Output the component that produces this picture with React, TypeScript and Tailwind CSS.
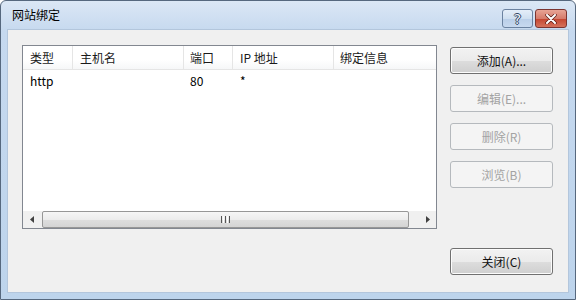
import React from "react";

const font = { fontFamily: '"Noto Sans CJK SC", "Noto Sans", sans-serif' };

function Btn({ label, disabled }: { label: string; disabled?: boolean }) {
  if (disabled) {
    return (
      <div className="h-[27px] w-[103px] rounded-[3px] border border-[#b5b9bd] bg-[#f4f4f4] flex items-center justify-center text-[12px] text-[#a3a3a3]">
        {label}
      </div>
    );
  }
  return (
    <div className="h-[27px] w-[103px] rounded-[3px] border border-[#707070] bg-[linear-gradient(#f2f2f2_0%,#ebebeb_50%,#dddddd_51%,#cfcfcf_100%)] shadow-[inset_0_0_0_1px_#fcfcfc] flex items-center justify-center text-[12px] text-[#111]">
      {label}
    </div>
  );
}

export default function App() {
  return (
    <div className="w-[576px] h-[300px] bg-white" style={font}>
      <div className="w-[576px] h-[300px] flex flex-col rounded-t-[6px] border border-[#56687e] bg-[linear-gradient(#dbe7f5_0px,#c6d9ef_30px,#bdd4ec_100%)]">
        <div className="h-[28px] flex items-start shrink-0">
          <div className="pl-[11px] pt-[5px] text-[12px] text-black leading-[18px]">网站绑定</div>
          <div className="ml-auto flex pt-[8px] pr-[8px] gap-[2px]">
            <div className="w-[31px] h-[19px] rounded-[3px] border border-[#6b82a0] bg-[linear-gradient(#e5eef9_0%,#cfdff0_50%,#b9cee8_51%,#c7d9ef_100%)] flex items-center justify-center">
              <span
                className="text-[14px] text-[#eef4fb] leading-none"
                style={{
                  fontFamily: '"DejaVu Sans", sans-serif',
                  textShadow: "1px 0 0 #2f4461, -1px 0 0 #2f4461, 0 1px 0 #2f4461, 0 -1px 0 #2f4461",
                }}
              >
                ?
              </span>
            </div>
            <div className="w-[32px] h-[19px] rounded-[3px] border border-[#7b3430] bg-[linear-gradient(#e8a495_0%,#d67b6b_50%,#c4442f_51%,#d5725c_100%)] flex items-center justify-center">
              <svg width="12" height="10" viewBox="0 0 12 10">
                <path d="M2 1 L10 9 M10 1 L2 9" stroke="#5a1a14" strokeWidth="3.4" strokeLinecap="round" />
                <path d="M2 1 L10 9 M10 1 L2 9" stroke="#ffffff" strokeWidth="2" strokeLinecap="round" />
              </svg>
            </div>
          </div>
        </div>
        <div className="flex-1 mx-[6px] mb-[6px] border border-[#b3c6dc] bg-[#f0f0f0] flex pt-[15px] pl-[14px] pr-[14px] pb-[17px]">
          <div className="w-[415px] h-[184px] border border-[#828790] bg-white flex flex-col">
            <div className="h-[24px] flex text-[12px] text-[#1a1a1a] border-b border-[#e5e5e5] bg-[linear-gradient(#ffffff,#ffffff_60%,#f6f7f8)]">
              <div className="w-[50px] pl-[7px] border-r border-[#e5e5e5] flex items-center">类型</div>
              <div className="w-[111px] pl-[7px] border-r border-[#e5e5e5] flex items-center">主机名</div>
              <div className="w-[49px] pl-[6px] border-r border-[#e5e5e5] flex items-center">端口</div>
              <div className="w-[101px] pl-[7px] border-r border-[#e5e5e5] flex items-center">IP 地址</div>
              <div className="flex-1 pl-[6px] flex items-center">绑定信息</div>
            </div>
            <div className="flex-1">
              <div className="h-[22px] flex text-[12px] text-black">
                <div className="w-[50px] pl-[7px] flex items-center">http</div>
                <div className="w-[111px]" />
                <div className="w-[49px] pl-[6px] flex items-center">80</div>
                <div className="w-[101px] pl-[7px] flex items-center">*</div>
              </div>
            </div>
            <div className="h-[17px] flex bg-[#f0f0f0]">
              <div className="w-[17px] flex items-center justify-center">
                <svg width="4" height="7" viewBox="0 0 4 7"><path d="M4 0 L0 3.5 L4 7 Z" fill="#404040" /></svg>
              </div>
              <div className="flex-1 flex items-stretch pl-[2px] pr-[10px]">
                <div className="flex-1 rounded-[2px] border border-[#979797] bg-[linear-gradient(#f6f6f6_0%,#ececec_50%,#dedede_51%,#d4d4d4_100%)] flex items-center justify-center">
                  <div className="flex gap-[1px]">
                    <div className="w-[1px] h-[7px] bg-[#555]" />
                    <div className="w-[1px] h-[7px] bg-[#fff]" />
                    <div className="w-[1px] h-[7px] bg-[#555]" />
                    <div className="w-[1px] h-[7px] bg-[#fff]" />
                    <div className="w-[1px] h-[7px] bg-[#555]" />
                  </div>
                </div>
              </div>
              <div className="w-[17px] flex items-center justify-center">
                <svg width="4" height="7" viewBox="0 0 4 7"><path d="M0 0 L4 3.5 L0 7 Z" fill="#404040" /></svg>
              </div>
            </div>
          </div>
          <div className="ml-[13px] flex flex-col pt-[2px]">
            <div className="flex flex-col gap-[11px]">
              <Btn label="添加(A)..." />
              <Btn label="编辑(E)..." disabled />
              <Btn label="删除(R)" disabled />
              <Btn label="浏览(B)" disabled />
            </div>
            <div className="mt-auto">
              <Btn label="关闭(C)" />
            </div>
          </div>
        </div>
      </div>
    </div>
  );
}
